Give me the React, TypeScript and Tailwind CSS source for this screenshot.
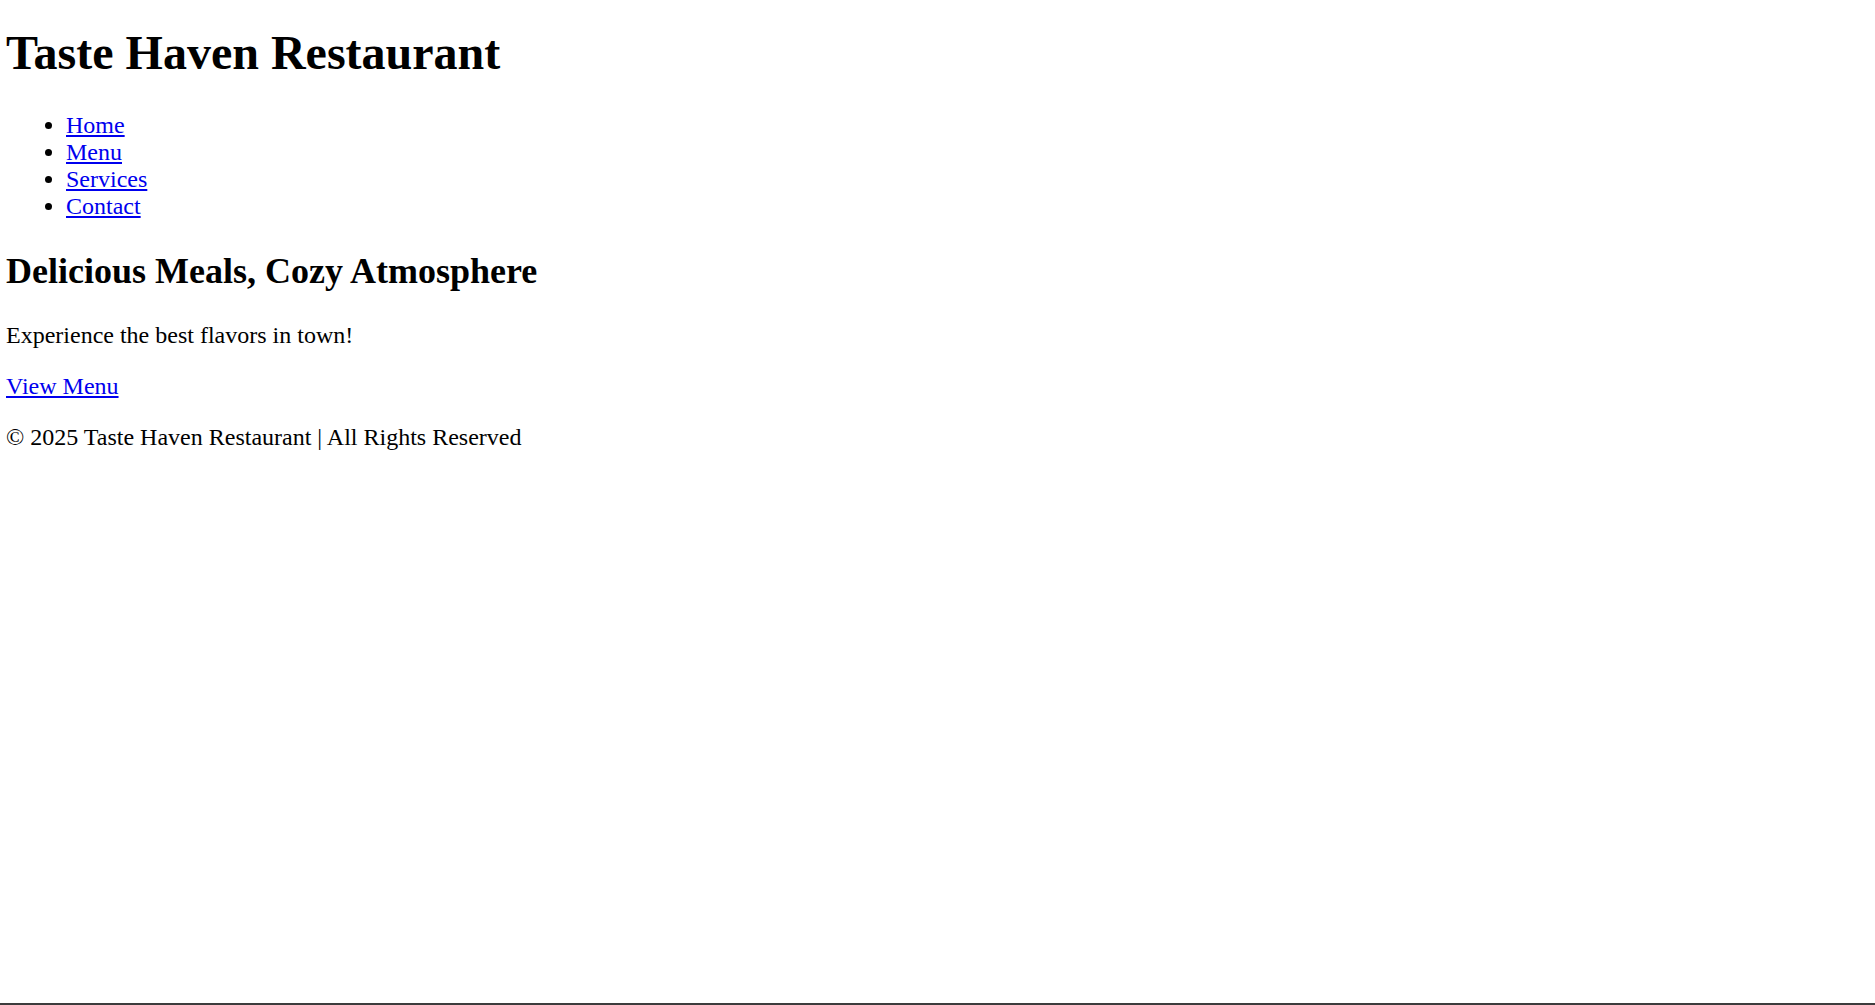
import React from 'react';

const links = ['Home', 'Menu', 'Services', 'Contact'];

export default function App() {
  return (
    <div className="flex h-[1005px] flex-col overflow-hidden bg-white font-['Liberation_Serif','Times_New_Roman',serif] text-black">
      <div className="flow-root pl-[6px] pt-[25px] text-[24px] leading-[27px]">
        {/* Header */}
        <header>
          <h1 className="mb-[32px] text-[48px] font-bold leading-[55px]">Taste Haven Restaurant</h1>
          <nav>
            <ul className="mb-[30px] list-disc pl-[60px]">
              {links.map((l) => (
                <li key={l}>
                  <a href="#" className="text-[#0000ee] underline">
                    {l}
                  </a>
                </li>
              ))}
            </ul>
          </nav>
        </header>

        {/* Hero */}
        <section>
          <h2 className="mb-[30px] text-[36px] font-bold leading-[42px]">Delicious Meals, Cozy Atmosphere</h2>
          <p className="mb-[24px]">Experience the best flavors in town!</p>
          <p className="mb-[24px]">
            <a href="#" className="text-[#0000ee] underline">
              View Menu
            </a>
          </p>
        </section>

        <footer>
          <p>© 2025 Taste Haven Restaurant | All Rights Reserved</p>
        </footer>
      </div>

      {/* window edge */}
      <div className="mt-auto h-[2px] bg-[#3c3c3c]" />
    </div>
  );
}
